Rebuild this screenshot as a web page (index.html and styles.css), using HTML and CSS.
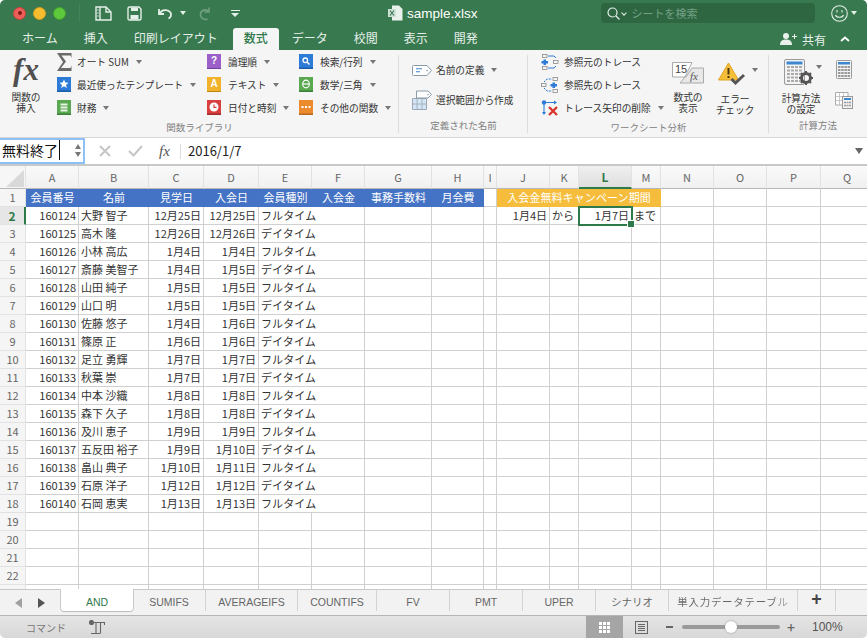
FILE: index.html
```html
<!DOCTYPE html>
<html lang="ja">
<head>
	<meta charset="UTF-8">
	<title>sample.xlsx</title>
	<link rel="stylesheet" href="styles.css">
</head>
<body>
<div class="window">
	<!-- title bar -->
	<div class="titlebar">
		<div class="lights">
			<span class="light red"></span>
			<span class="light yellow"></span>
			<span class="light green"></span>
		</div>
		<span class="qa-sep"></span>
		<svg class="qa-sidebar" width="17" height="15" viewBox="0 0 17 15" fill="none" stroke="#e4efe8" stroke-width="1.4"><path d="M1 1H11L16 6V14H1Z"/><path d="M5 1V14M2.5 4H3.5M2.5 7H3.5M2.5 10H3.5M11 1V6H16"/></svg>
		<svg class="qa-save" width="15" height="15" viewBox="0 0 15 15"><path d="M1 2.5Q1 1 2.5 1H12L14 3V12.5Q14 14 12.5 14H2.5Q1 14 1 12.5Z" fill="none" stroke="#e4efe8" stroke-width="1.4"/><path d="M4 1.5H11V5H4ZM3.5 9H11.5V13.5H3.5Z" fill="#e4efe8"/></svg>
		<svg class="qa-undo" width="16" height="14" viewBox="0 0 16 14" fill="none" stroke="#e4efe8" stroke-width="1.8"><path d="M2 3V8H7"/><path d="M2.5 7.5C5 3.5 11 3 13.5 6.5C15 9 13.5 11.5 11.5 12.5"/></svg>
		<span class="caret light-caret qa-undo-caret"></span>
		<svg class="qa-redo" width="13" height="15" viewBox="0 0 13 15" fill="none" stroke="#6f9f80" stroke-width="1.6"><path d="M10 1.5V6H5.5"/><path d="M9.5 5.5C7 2.5 2 4 1.5 8C1 11.500 5 14.500 8.500 13"/></svg>
		<span class="qa-more"></span>
		<div class="doc-title">
			<svg width="15" height="16" viewBox="0 0 15 16"><path d="M4 0.500H11L14.500 4V15.500H4Z" fill="#e9f1ec"/><path d="M0 4H8V12H0Z" fill="#cfe0d6"/><path d="M2 5.500L6 10.500M6 5.500L2 10.500" stroke="#3a7a50" stroke-width="1.200"/></svg>
			<span>sample.xlsx</span>
		</div>
		<div class="searchbox">
			<svg width="13" height="13" viewBox="0 0 13 13" fill="none" stroke="#e4efe8" stroke-width="1.2"><circle cx="5.500" cy="5.500" r="4.500"/><path d="M9 9L12.500 12.500"/></svg>
			<span class="search-chev"></span>
			<span class="search-text">シートを検索</span>
		</div>
		<svg class="smiley" width="17" height="17" viewBox="0 0 17 17" fill="none" stroke="#e4efe8" stroke-width="1.1"><circle cx="8.500" cy="8.500" r="7.800"/><path d="M4.500 10C5.500 13 11.500 13 12.500 10"/><path d="M6 5V7.500M11 5V7.500"/></svg>
		<span class="caret light-caret"></span>
	</div>

	<!-- ribbon tabs -->
	<div class="tabbar">
		<a class="rtab">ホーム</a>
		<a class="rtab">挿入</a>
		<a class="rtab">印刷レイアウト</a>
		<a class="rtab active">数式</a>
		<a class="rtab">データ</a>
		<a class="rtab">校閲</a>
		<a class="rtab">表示</a>
		<a class="rtab">開発</a>
		<div class="share">
			<svg width="17" height="12" viewBox="0 0 17 12" fill="#e9f1ec"><circle cx="6" cy="3" r="3"/><path d="M0 12C0 7.500 3 6.500 6 6.500S12 7.500 12 12Z"/><path d="M12 3H14V1H15V3H17V4H15V6H14V4H12Z"/></svg>
			<span>共有</span>
			<svg class="chev" width="10" height="6" viewBox="0 0 10 6" fill="none" stroke="#fff" stroke-width="1.800"><path d="M1 5L5 1.500L9 5"/></svg>
		</div>
	</div>

	<!-- ribbon -->
	<div class="ribbon">
		<section class="group g-lib">
			<div class="group-body">
				<div class="big big-fx">
					<span class="fx-glyph">fx</span>
					<span class="big-label">関数の<br>挿入</span>
				</div>
				<div class="col col-a">
					<div class="item"><svg class="ico" width="15" height="18" viewBox="0 0 15 18"><path d="M0 0H14.500V5L13.500 2.500H4.500L9 8.500L4 15H13.500L14.500 12.500V18H0L6 9Z" fill="#6a6a6a"/></svg><span>オート SUM</span><i class="caret"></i></div>
					<div class="item"><svg class="ico" width="14" height="15" viewBox="0 0 14 15"><rect width="14" height="15" fill="#2c7bd6"/><rect y="13.500" width="14" height="1.500" fill="#1f5fa8"/><path d="M7 2.500L8.300 5.600L11.500 5.800L9 7.900L9.900 11L7 9.300L4.100 11L5 7.900L2.500 5.800L5.700 5.600Z" fill="#fff"/></svg><span>最近使ったテンプレート</span><i class="caret"></i></div>
					<div class="item"><svg class="ico" width="14" height="15" viewBox="0 0 14 15"><rect width="14" height="15" fill="#5aa84f"/><rect y="13.500" width="14" height="1.500" fill="#3c7f36"/><path d="M3.500 3.500H10.500V5.500H3.500ZM3.500 6.500H10.500V8.500H3.500ZM3.500 9.500H10.500V11.500H3.500Z" fill="#e8f4e6"/></svg><span>財務</span><i class="caret"></i></div>
				</div>
				<div class="col col-b">
					<div class="item"><span class="ico-letter purple">?</span><span>論理順</span><i class="caret"></i></div>
					<div class="item"><span class="ico-letter amber">A</span><span>テキスト</span><i class="caret"></i></div>
					<div class="item"><svg class="ico" width="14" height="15" viewBox="0 0 14 15"><rect width="14" height="15" fill="#d93f3f"/><rect y="13.500" width="14" height="1.500" fill="#a52c2c"/><circle cx="7" cy="7" r="4.500" fill="#fff"/><path d="M7 4.500V7.300H9.500" fill="none" stroke="#d93f3f" stroke-width="1.200"/></svg><span>日付と時刻</span><i class="caret"></i></div>
				</div>
				<div class="col col-c">
					<div class="item"><svg class="ico" width="14" height="15" viewBox="0 0 14 15"><rect width="14" height="15" fill="#2c7bd6"/><rect y="13.500" width="14" height="1.500" fill="#1f5fa8"/><circle cx="6.300" cy="6.300" r="2.300" fill="none" stroke="#fff" stroke-width="1.300"/><path d="M8 8L10.500 10.500" stroke="#fff" stroke-width="1.500"/></svg><span>検索/行列</span><i class="caret"></i></div>
					<div class="item"><svg class="ico" width="14" height="15" viewBox="0 0 14 15"><rect width="14" height="15" fill="#5aa84f"/><rect y="13.500" width="14" height="1.500" fill="#3c7f36"/><ellipse cx="7" cy="7" rx="3.300" ry="3.800" fill="none" stroke="#fff" stroke-width="1.200"/><path d="M4 7H10" stroke="#fff" stroke-width="1.100"/></svg><span>数学/三角</span><i class="caret"></i></div>
					<div class="item"><svg class="ico" width="14" height="15" viewBox="0 0 14 15"><rect width="14" height="15" fill="#ec8a2e"/><rect y="13.500" width="14" height="1.500" fill="#b9691f"/><path d="M2.500 6H4.500V8H2.500ZM6 6H8V8H6ZM9.500 6H11.500V8H9.500Z" fill="#fff"/></svg><span>その他の関数</span><i class="caret"></i></div>
				</div>
			</div>
			<div class="group-label">関数ライブラリ</div>
		</section>

		<section class="group g-names">
			<div class="group-body names-body">
				<div class="item tall"><svg class="ico" width="20" height="11" viewBox="0 0 20 11"><path d="M1.500 0.500H15L19.500 5.500L15 10.500H1.500Q0.500 10.500 0.500 9.500V1.500Q0.500 0.500 1.500 0.500Z" fill="#fff" stroke="#8a9aa8"/><path d="M4 3.800H10M4 6.800H8" stroke="#3d86d0" stroke-width="1.100"/><circle cx="15" cy="5.500" r="0.800" fill="#8a9aa8"/></svg><span>名前の定義</span><i class="caret"></i></div>
				<div class="item tall"><svg class="ico" width="20" height="20" viewBox="0 0 20 20"><path d="M0.500 8.500H14.500V19.500H0.500Z" fill="#d5e4f4" stroke="#9aa8b5"/><path d="M5 8.500V19.500M10 8.500V19.500M0.500 14H14.500" stroke="#9aa8b5" stroke-width="0.800"/><path d="M4.500 1H16L19.500 4.500L16 8H4.500Z" fill="#fff" stroke="#8a9aa8"/><circle cx="16" cy="4.500" r="0.800" fill="#8a9aa8"/></svg><span>選択範囲から作成</span></div>
			</div>
			<div class="group-label">定義された名前</div>
		</section>

		<section class="group g-audit">
			<div class="group-body">
				<div class="col col-trace">
					<div class="item"><svg class="ico" width="18" height="16" viewBox="0 0 18 16"><g fill="none" stroke="#8a8a8a" stroke-width="0.800"><rect x="1.500" y="0.500" width="4.500" height="3"/><rect x="1.500" y="12.500" width="4.500" height="3"/><rect x="12.500" y="6.500" width="4.500" height="3"/></g><path d="M7 2H13L15 4M7 14H13L15 12" fill="none" stroke="#2c7bd6" stroke-width="1"/><path d="M2.500 5.500H5V7H7V9.500H5V11H2.500V9.500H0.500V7H2.500Z" fill="#2c7bd6"/></svg><span>参照元のトレース</span></div>
					<div class="item"><svg class="ico" width="18" height="16" viewBox="0 0 18 16"><g fill="none" stroke="#8a8a8a" stroke-width="0.800"><rect x="12" y="0.500" width="4.500" height="3"/><rect x="12" y="12.500" width="4.500" height="3"/><rect x="0.500" y="6.500" width="4.500" height="3"/></g><path d="M3 5L6 2H11M3 11L6 14H11" fill="none" stroke="#2c7bd6" stroke-width="1" stroke-dasharray="2 1"/><path d="M11.500 5.500H14V7H16V9.500H14V11H11.500V9.500H9.500V7H11.500Z" fill="#2c7bd6"/></svg><span>参照先のトレース</span></div>
					<div class="item"><svg class="ico" width="18" height="16" viewBox="0 0 18 16"><circle cx="3" cy="2.500" r="2.200" fill="#2c7bd6"/><path d="M3 3V14M5 2.500H15" stroke="#2c7bd6" stroke-width="1.100" fill="none"/><path d="M1 12L3 15L5 12ZM13 0.500L16 2.500L13 4.500Z" fill="#2c7bd6"/><path d="M8 7L16 15M16 7L8 15" stroke="#d8352e" stroke-width="2.400"/></svg><span>トレース矢印の削除</span><i class="caret"></i></div>
				</div>
				<div class="big big-formulas">
					<svg width="32" height="22" viewBox="0 0 32 22"><path d="M0.500 0.500H20L13 15H0.500Z" fill="#fff" stroke="#aaa"/><path d="M20 6H31.500V21H8L13 15H14Z" fill="#e8e8e8" stroke="#aaa"/><text x="3" y="11" class="svg-15">15</text><text x="18" y="18" class="svg-fx">fx</text></svg>
					<span class="big-label">数式の<br>表示</span>
				</div>
				<div class="big big-error">
					<div class="error-top">
						<svg width="28" height="24" viewBox="0 0 28 24"><path d="M10.500 1L20.500 18H0.500Z" fill="#f6bf3a" stroke="#e0a321" stroke-linejoin="round"/><path d="M9.500 6H11.500V12.500H9.500ZM9.500 14H11.500V16H9.500Z" fill="#4a3a10"/><path d="M13.500 17L17.500 21L26 13" fill="none" stroke="#555" stroke-width="3"/></svg>
						<i class="caret"></i>
					</div>
					<span class="big-label">エラー<br>チェック</span>
				</div>
			</div>
			<div class="group-label">ワークシート分析</div>
		</section>

		<section class="group g-calc">
			<div class="group-body">
				<div class="big big-calc">
					<div class="error-top">
						<svg width="30" height="27" viewBox="0 0 30 27"><rect x="0.500" y="0.500" width="20" height="25" rx="1.500" fill="#f4f4f4" stroke="#999"/><rect x="2.500" y="2.500" width="16" height="3" fill="#3d86d0"/><path d="M3 8H18M3 11.500H18M3 15H18M3 18.500H18M3 22H18" stroke="#aaa" stroke-width="2" stroke-dasharray="3 1"/><circle cx="22" cy="19" r="4.500" fill="none" stroke="#555" stroke-width="3"/><path d="M22 12V14.500M22 23.500V26M15 19H17.500M26.500 19H29M17 14L18.800 15.800M25.200 22.200L27 24M27 14L25.200 15.800M18.800 22.200L17 24" stroke="#555" stroke-width="2"/></svg>
						<i class="caret"></i>
					</div>
					<span class="big-label">計算方法<br>の設定</span>
				</div>
				<div class="col col-sheets">
					<svg width="16" height="19" viewBox="0 0 16 19"><rect x="0.500" y="0.500" width="15" height="18" rx="1" fill="#f4f4f4" stroke="#999"/><rect x="2" y="2" width="12" height="2.500" fill="#3d86d0"/><path d="M2 7H14M2 10H14M2 13H14M2 16H14" stroke="#999" stroke-width="1.800" stroke-dasharray="2.500 0.700"/></svg>
					<svg width="18" height="17" viewBox="0 0 18 17"><path d="M0.500 0.500H13V13H0.500Z" fill="#fff" stroke="#aaa"/><path d="M4.500 0.500V13M8.500 0.500V13M0.500 4.500H13M0.500 8.500H13" stroke="#bbb" stroke-width="0.800"/><rect x="7.500" y="4.500" width="10" height="12" fill="#f4f4f4" stroke="#999"/><rect x="9" y="6" width="7" height="2" fill="#3d86d0"/><path d="M9 10.500H16M9 13.500H16" stroke="#999" stroke-width="1.500" stroke-dasharray="2 0.500"/></svg>
				</div>
			</div>
			<div class="group-label">計算方法</div>
		</section>
	</div>

	<!-- formula bar -->
	<div class="formula">
		<div class="namebox">
			<span class="name-text">無料終了</span>
			<span class="stepper"><i class="up"></i><i class="down"></i></span>
		</div>
		<svg class="f-cancel" width="12" height="12" viewBox="0 0 12 12" stroke="#c6c6c6" stroke-width="2"><path d="M1 1L11 11M11 1L1 11"/></svg>
		<svg class="f-ok" width="15" height="12" viewBox="0 0 15 12" fill="none" stroke="#c6c6c6" stroke-width="2"><path d="M1 6L5.500 10.500L14 1"/></svg>
		<span class="f-fx">fx</span>
		<span class="f-value">2016/1/7</span>
		<span class="f-drop"></span>
	</div>

	<!-- sheet -->
	<div class="sheet">
		<div class="grid">
			<div class="corner"><svg width="18" height="17" viewBox="0 0 18 17"><path d="M18 0V17H0Z" fill="#d9d9d9"/></svg></div>
			<div class="ch">A</div><div class="ch">B</div><div class="ch">C</div><div class="ch">D</div><div class="ch">E</div><div class="ch">F</div><div class="ch">G</div><div class="ch">H</div><div class="ch">I</div><div class="ch">J</div><div class="ch">K</div><div class="ch sel">L</div><div class="ch">M</div><div class="ch">N</div><div class="ch">O</div><div class="ch">P</div><div class="ch">Q</div>

			<div class="rh">1</div><div class="hd">会員番号</div><div class="hd">名前</div><div class="hd">見学日</div><div class="hd">入会日</div><div class="hd">会員種別</div><div class="hd">入会金</div><div class="hd">事務手数料</div><div class="hd">月会費</div><div></div><div class="camp">入会金無料キャンペーン期間</div><div></div><div></div><div></div><div></div>

			<div class="rh sel">2</div><div class="r">160124</div><div>大野 智子</div><div class="r">12月25日</div><div class="r">12月25日</div><div class="of">フルタイム</div><div></div><div></div><div></div><div></div><div class="r">1月4日</div><div>から</div><div class="r cursor">1月7日</div><div>まで</div><div></div><div></div><div></div><div></div>
			<div class="rh">3</div><div class="r">160125</div><div>高木 隆</div><div class="r">12月26日</div><div class="r">12月26日</div><div class="of">デイタイム</div><div></div><div></div><div></div><div></div><div></div><div></div><div></div><div></div><div></div><div></div><div></div><div></div>
			<div class="rh">4</div><div class="r">160126</div><div>小林 高広</div><div class="r">1月4日</div><div class="r">1月4日</div><div class="of">フルタイム</div><div></div><div></div><div></div><div></div><div></div><div></div><div></div><div></div><div></div><div></div><div></div><div></div>
			<div class="rh">5</div><div class="r">160127</div><div>斎藤 美智子</div><div class="r">1月4日</div><div class="r">1月5日</div><div class="of">デイタイム</div><div></div><div></div><div></div><div></div><div></div><div></div><div></div><div></div><div></div><div></div><div></div><div></div>
			<div class="rh">6</div><div class="r">160128</div><div>山田 純子</div><div class="r">1月5日</div><div class="r">1月5日</div><div class="of">フルタイム</div><div></div><div></div><div></div><div></div><div></div><div></div><div></div><div></div><div></div><div></div><div></div><div></div>
			<div class="rh">7</div><div class="r">160129</div><div>山口 明</div><div class="r">1月5日</div><div class="r">1月5日</div><div class="of">デイタイム</div><div></div><div></div><div></div><div></div><div></div><div></div><div></div><div></div><div></div><div></div><div></div><div></div>
			<div class="rh">8</div><div class="r">160130</div><div>佐藤 悠子</div><div class="r">1月4日</div><div class="r">1月6日</div><div class="of">フルタイム</div><div></div><div></div><div></div><div></div><div></div><div></div><div></div><div></div><div></div><div></div><div></div><div></div>
			<div class="rh">9</div><div class="r">160131</div><div>篠原 正</div><div class="r">1月6日</div><div class="r">1月6日</div><div class="of">デイタイム</div><div></div><div></div><div></div><div></div><div></div><div></div><div></div><div></div><div></div><div></div><div></div><div></div>
			<div class="rh">10</div><div class="r">160132</div><div>足立 勇輝</div><div class="r">1月7日</div><div class="r">1月7日</div><div class="of">フルタイム</div><div></div><div></div><div></div><div></div><div></div><div></div><div></div><div></div><div></div><div></div><div></div><div></div>
			<div class="rh">11</div><div class="r">160133</div><div>秋葉 崇</div><div class="r">1月7日</div><div class="r">1月7日</div><div class="of">デイタイム</div><div></div><div></div><div></div><div></div><div></div><div></div><div></div><div></div><div></div><div></div><div></div><div></div>
			<div class="rh">12</div><div class="r">160134</div><div>中本 沙織</div><div class="r">1月8日</div><div class="r">1月8日</div><div class="of">フルタイム</div><div></div><div></div><div></div><div></div><div></div><div></div><div></div><div></div><div></div><div></div><div></div><div></div>
			<div class="rh">13</div><div class="r">160135</div><div>森下 久子</div><div class="r">1月8日</div><div class="r">1月8日</div><div class="of">デイタイム</div><div></div><div></div><div></div><div></div><div></div><div></div><div></div><div></div><div></div><div></div><div></div><div></div>
			<div class="rh">14</div><div class="r">160136</div><div>及川 恵子</div><div class="r">1月9日</div><div class="r">1月9日</div><div class="of">フルタイム</div><div></div><div></div><div></div><div></div><div></div><div></div><div></div><div></div><div></div><div></div><div></div><div></div>
			<div class="rh">15</div><div class="r">160137</div><div>五反田 裕子</div><div class="r">1月9日</div><div class="r">1月10日</div><div class="of">デイタイム</div><div></div><div></div><div></div><div></div><div></div><div></div><div></div><div></div><div></div><div></div><div></div><div></div>
			<div class="rh">16</div><div class="r">160138</div><div>畠山 典子</div><div class="r">1月10日</div><div class="r">1月11日</div><div class="of">フルタイム</div><div></div><div></div><div></div><div></div><div></div><div></div><div></div><div></div><div></div><div></div><div></div><div></div>
			<div class="rh">17</div><div class="r">160139</div><div>石原 洋子</div><div class="r">1月12日</div><div class="r">1月12日</div><div class="of">デイタイム</div><div></div><div></div><div></div><div></div><div></div><div></div><div></div><div></div><div></div><div></div><div></div><div></div>
			<div class="rh">18</div><div class="r">160140</div><div>石岡 恵実</div><div class="r">1月13日</div><div class="r">1月13日</div><div class="of">フルタイム</div><div></div><div></div><div></div><div></div><div></div><div></div><div></div><div></div><div></div><div></div><div></div><div></div>
			<div class="rh">19</div><div></div><div></div><div></div><div></div><div></div><div></div><div></div><div></div><div></div><div></div><div></div><div></div><div></div><div></div><div></div><div></div><div></div>
			<div class="rh">20</div><div></div><div></div><div></div><div></div><div></div><div></div><div></div><div></div><div></div><div></div><div></div><div></div><div></div><div></div><div></div><div></div><div></div>
			<div class="rh">21</div><div></div><div></div><div></div><div></div><div></div><div></div><div></div><div></div><div></div><div></div><div></div><div></div><div></div><div></div><div></div><div></div><div></div>
			<div class="rh">22</div><div></div><div></div><div></div><div></div><div></div><div></div><div></div><div></div><div></div><div></div><div></div><div></div><div></div><div></div><div></div><div></div><div></div>
			<div class="rh"></div><div></div><div></div><div></div><div></div><div></div><div></div><div></div><div></div><div></div><div></div><div></div><div></div><div></div><div></div><div></div><div></div><div></div>
		</div>
	</div>

	<!-- sheet tabs -->
	<div class="sheetbar">
		<div class="sheet-nav"><i class="nav-left"></i><i class="nav-right"></i></div>
		<a class="stab active w-and">AND</a>
		<a class="stab w-73">SUMIFS</a>
		<a class="stab w-avg">AVERAGEIFS</a>
		<a class="stab w-cnt">COUNTIFS</a>
		<a class="stab w-73">FV</a>
		<a class="stab w-73">PMT</a>
		<a class="stab w-73">UPER</a>
		<a class="stab w-73">シナリオ</a>
		<a class="stab w-long"><span>単入力データテーブル</span></a>
		<a class="stab w-add">+</a>
	</div>

	<!-- status bar -->
	<div class="status">
		<span class="st-text">コマンド</span>
		<svg class="st-macro" width="16" height="14" viewBox="0 0 16 14" fill="none" stroke="#666" stroke-width="1.100"><circle cx="2.500" cy="2.500" r="2" fill="#666"/><path d="M4 2.500H15.500V5M7 2.500V13M2 13.500H11.500M11.500 2.500V13"/></svg>
		<div class="st-right">
			<span class="view active"><svg width="13" height="13" viewBox="0 0 13 13" fill="#fff" stroke="#a5a5a5" stroke-width="1"><rect x="0.500" y="0.500" width="12" height="12"/><path d="M4.500 0.500V12.500M8.500 0.500V12.500M0.500 4.500H12.500M0.500 8.500H12.500"/></svg></span>
			<span class="view"><svg width="13" height="13" viewBox="0 0 13 13" fill="none" stroke="#666" stroke-width="1"><rect x="0.500" y="0.500" width="12" height="12"/><path d="M3 3.500H10M3 5.500H10M3 7.500H10M3 9.500H10"/></svg></span>
			<span class="zoom-minus"></span>
			<div class="slider"><span class="thumb"></span></div>
			<span class="zoom-plus">+</span>
			<span class="zoom-val">100%</span>
		</div>
	</div>
</div>
</body>
</html>
```

FILE: styles.css
```css
*{
	margin: 0;
	padding: 0;
	box-sizing: border-box;
}
html,body{
	height: 100%;
	background: #fff;
}
body{
	font-family: "Noto Sans CJK JP", "Liberation Sans", sans-serif;
	font-size: 10px;
	color: #333;
	overflow: hidden;
}
i{
	font-style: normal;
}
.window{
	display: flex;
	flex-direction: column;
	width: 867px;
	height: 638px;
	border-radius: 5px;
	overflow: hidden;
}

/* title bar */
.titlebar{
	display: flex;
	align-items: center;
	height: 26px;
	flex: none;
	background: #38794f;
}
.lights{
	display: flex;
	gap: 7px;
	margin-left: 13px;
}
.light{
	position: relative;
	width: 13px;
	height: 13px;
	border-radius: 50%;
}
.light.red{
	background: #ec5f58;
	border: 1px solid #c9433c;
}
.light.red::after{
	content: "";
	position: absolute;
	left: 3.500px;
	top: 3.500px;
	width: 4px;
	height: 4px;
	border-radius: 50%;
	background: #7e1b16;
}
.light.yellow{
	background: #f7bd2e;
	border: 1px solid #d79f1f;
}
.light.green{
	background: #5ec83d;
	border: 1px solid #45a52b;
}
.qa-sep{
	width: 1px;
	height: 18px;
	margin-left: 13px;
	background: #44845b;
}
.qa-sidebar{
	margin-left: 15px;
}
.qa-save{
	margin-left: 15px;
}
.qa-undo{
	margin-left: 15px;
}
.qa-undo-caret{
	margin-left: 6px;
}
.qa-redo{
	margin-left: 13px;
}
.qa-more{
	width: 9px;
	height: 7px;
	margin-left: 19px;
	border-top: 1px solid #e4efe8;
	position: relative;
}
.qa-more::after{
	content: "";
	position: absolute;
	left: 0;
	top: 2px;
	border-left: 4.500px solid transparent;
	border-right: 4.500px solid transparent;
	border-top: 4px solid #e4efe8;
}
.caret{
	display: inline-block;
	flex: none;
	width: 0;
	height: 0;
	margin-left: 7px;
	border-left: 3.500px solid transparent;
	border-right: 3.500px solid transparent;
	border-top: 4px solid #777;
}
.light-caret{
	border-top-color: #e4efe8;
}
.doc-title{
	display: flex;
	align-items: center;
	gap: 4px;
	margin-left: 148px;
	color: #fff;
	font-family: "Liberation Sans", sans-serif;
	font-size: 13.500px;
}
.searchbox{
	display: flex;
	align-items: center;
	width: 214px;
	height: 20px;
	margin-left: 123px;
	padding-left: 6px;
	border-radius: 4px;
	background: #2f6642;
}
.search-chev{
	width: 4px;
	height: 4px;
	margin-left: 2px;
	border-right: 1px solid #e4efe8;
	border-bottom: 1px solid #e4efe8;
	transform: rotate(45deg);
}
.search-text{
	margin-left: 6px;
	font-size: 11px;
	color: #74a185;
}
.smiley{
	margin-left: 16px;
}
.titlebar .smiley + .caret{
	margin-left: 3px;
}

/* ribbon tabs */
.tabbar{
	display: flex;
	align-items: flex-end;
	height: 24px;
	flex: none;
	padding-left: 9px;
	background: #38794f;
}
.rtab{
	height: 22px;
	padding: 0 13px;
	font-size: 12px;
	line-height: 20px;
	color: #e6f0ea;
}
.rtab.active{
	margin: 0 0 0 2px;
	padding: 0 11px;
	border-radius: 3px 3px 0 0;
	background: #f5f5f5;
	color: #2f7a4b;
	font-weight: 500;
}
.share{
	display: flex;
	align-items: center;
	gap: 5px;
	height: 22px;
	margin-left: auto;
	padding-right: 17px;
	font-size: 12px;
	color: #e9f1ec;
}
.share .chev{
	margin-left: 9px;
}

/* ribbon */
.ribbon{
	display: flex;
	height: 87px;
	flex: none;
	background: #f5f5f5;
}
.group{
	display: flex;
	flex-direction: column;
	position: relative;
}
.group::after{
	content: "";
	position: absolute;
	right: 0;
	top: 5px;
	bottom: 4px;
	width: 1px;
	background: #dcdcdc;
}
.group:last-child::after{
	display: none;
}
.g-lib{
	width: 399px;
}
.g-names{
	width: 129px;
}
.g-audit{
	width: 241px;
}
.g-calc{
	flex: 1;
}
.group-body{
	display: flex;
	flex: 1;
}
.group-label{
	flex: none;
	height: 20px;
	font-size: 9.500px;
	line-height: 16px;
	text-align: center;
	color: #808080;
}
.col{
	display: flex;
	flex-direction: column;
}
.item{
	display: flex;
	align-items: center;
	height: 23px;
	font-size: 9.700px;
	white-space: nowrap;
}
.item.tall{
	height: 30px;
}
.ico{
	flex: none;
	margin-right: 6px;
}
.ico-letter{
	flex: none;
	width: 14px;
	height: 15px;
	margin-right: 7px;
	font-family: "Liberation Sans", sans-serif;
	font-size: 10px;
	font-weight: 700;
	line-height: 13px;
	text-align: center;
	color: #fff;
}
.ico-letter.purple{
	background: #9a5fc9;
	border-bottom: 1.500px solid #70409a;
}
.ico-letter.amber{
	background: #f3b22c;
	border-bottom: 1.500px solid #bd8615;
}
.col-a{
	width: 150px;
	margin-left: 5px;
}
.col-b{
	width: 92px;
}
.col-a .item:first-child .ico{
	margin-right: 5px;
}
.col-b .item svg.ico,.col-c .item svg.ico{
	margin-right: 7px;
}
.big{
	display: flex;
	flex-direction: column;
	align-items: center;
	flex: none;
	white-space: nowrap;
}
.big-label{
	font-size: 9.700px;
	line-height: 11px;
	text-align: center;
}
.big-fx{
	width: 52px;
}
.fx-glyph{
	height: 42px;
	font-family: "Liberation Serif", serif;
	font-style: italic;
	font-weight: 700;
	font-size: 31px;
	line-height: 40px;
	color: #505050;
}
.names-body{
	flex-direction: column;
	padding: 5px 0 0 13px;
}
.names-body .ico{
	margin-right: 4px;
}
.col-trace{
	width: 124px;
	margin-left: 13px;
	flex: none;
}
.col-trace .ico{
	margin-right: 5px;
}
.big-formulas{
	width: 46px;
	padding-top: 12px;
}
.big-formulas svg{
	margin-bottom: 8px;
}
.svg-15{
	font-family: "Liberation Sans", sans-serif;
	font-size: 11px;
	fill: #444;
}
.svg-fx{
	font-family: "Liberation Serif", serif;
	font-style: italic;
	font-size: 11px;
	fill: #555;
}
.big-error{
	width: 48px;
	padding-top: 12px;
}
.error-top{
	display: flex;
	align-items: center;
	align-self: flex-start;
}
.big-error .error-top{
	margin-left: 7px;
}
.error-top .caret{
	align-self: flex-start;
	margin: 6px 0 0 2px;
}
.big-error .caret{
	margin-left: 6px;
}
.big-error .big-label{
	margin-top: 8px;
}
.big-calc{
	width: 64px;
	padding-top: 9px;
}
.big-calc .error-top{
	margin-left: 15px;
}
.big-calc .big-label{
	margin-top: 7px;
}
.col-sheets{
	align-items: center;
	gap: 13px;
	width: 22px;
	padding-top: 10px;
}

/* formula bar */
.formula{
	display: flex;
	align-items: center;
	height: 29px;
	flex: none;
	border-top: 1px solid #d6d6d6;
	border-bottom: 2px solid #c8c8c8;
	background: #fff;
}
.namebox{
	display: flex;
	align-items: center;
	width: 85px;
	height: 26px;
	flex: none;
	padding-left: 2px;
	padding-bottom: 2px;
	border: 2px solid #8ec1f3;
	border-left: 0;
}
.name-text{
	width: 58px;
	font-size: 14px;
	line-height: 20px;
	color: #111;
	border-right: 1px solid #111;
}
.stepper{
	display: flex;
	flex-direction: column;
	gap: 3px;
	margin-left: 15px;
}
.stepper .up{
	border-left: 3.500px solid transparent;
	border-right: 3.500px solid transparent;
	border-bottom: 5px solid #777;
}
.stepper .down{
	border-left: 3.500px solid transparent;
	border-right: 3.500px solid transparent;
	border-top: 5px solid #777;
}
.f-cancel{
	margin-left: 14px;
}
.f-ok{
	margin-left: 17px;
}
.f-fx{
	width: 22px;
	margin-left: 16px;
	border-right: 1px solid #ddd;
	font-family: "Liberation Serif", serif;
	font-style: italic;
	font-size: 15px;
	line-height: 15px;
	color: #555;
}
.f-value{
	margin-left: 7px;
	margin-bottom: 2px;
	font-size: 13px;
	color: #222;
}
.f-drop{
	margin-left: auto;
	margin-right: 4px;
	border-left: 4px solid transparent;
	border-right: 4px solid transparent;
	border-top: 6px solid #666;
}

/* sheet */
.sheet{
	height: 423px;
	flex: none;
	overflow: hidden;
	background: #fff;
}
.grid{
	display: grid;
	grid-template-columns: 26px 53px 70px 55px 55px 53px 53px 67px 52px 13px 53px 29px 53px 29px 53px 53px 54px 53px;
	grid-template-rows: 23px;
	grid-auto-rows: 18px;
	width: 867px;
	font-size: 11px;
	line-height: 17px;
	color: #333;
}
.grid > div{
	overflow: visible;
	padding: 0 2px;
	border-right: 1px solid #d0d0d0;
	border-bottom: 1px solid #d0d0d0;
	white-space: nowrap;
}
.grid > .corner{
	padding: 4px 0 0 6px;
	background: #f6f6f6;
	border-right-color: #e2e2e2;
	border-bottom-color: #b8b8b8;
}
.corner svg{
	display: block;
}
.grid > .ch{
	padding: 0;
	line-height: 22px;
	text-align: center;
	color: #666;
	background: linear-gradient(#fafafa, #f0f0f0);
	border-right-color: #e2e2e2;
	border-bottom-color: #b8b8b8;
}
.grid > .ch.sel{
	font-weight: 700;
	font-size: 12px;
	color: #2f7a4b;
	background: linear-gradient(#f0f0f0, #dedede);
	border-bottom: 2px solid #2f7a4b;
}
.grid > .rh{
	padding: 0;
	text-align: center;
	color: #666;
	background: #f5f5f5;
	border-right-color: #e2e2e2;
	border-bottom-color: #e2e2e2;
}
.grid > .rh.sel{
	font-weight: 700;
	font-size: 12px;
	color: #2f7a4b;
	background: #e6e6e6;
	border-right: 2px solid #2f7a4b;
}
.grid > .hd{
	padding: 0;
	text-align: center;
	color: #fff;
	background: #4472c4;
	border: 0;
}
.grid > .camp{
	grid-column: span 4;
	padding: 0;
	text-align: center;
	color: #fff;
	background: #f6bd3c;
	border: 0;
	letter-spacing: 0.100px;
}
.grid > .r{
	text-align: right;
}
.grid > .of{
	position: relative;
	z-index: 1;
	border-right: 0;
	background: #fff;
	margin-right: -4px;
	letter-spacing: 0.100px;
}
.grid > .cursor{
	position: relative;
	outline: 2px solid #2f7a4b;
	outline-offset: -1px;
	z-index: 2;
}
.cursor::after{
	content: "";
	position: absolute;
	right: -4px;
	bottom: -4px;
	width: 6px;
	height: 6px;
	background: #2f7a4b;
	border: 1px solid #fff;
}

/* sheet tabs */
.sheetbar{
	display: flex;
	align-items: flex-start;
	height: 27px;
	flex: none;
	border-top: 1px solid #c8c8c8;
	border-bottom: 1px solid #b5b5b5;
	background: #f2f2f2;
}
.sheet-nav{
	display: flex;
	align-items: center;
	gap: 16px;
	width: 61px;
	height: 25px;
	padding-left: 15px;
}
.nav-left{
	border-top: 5px solid transparent;
	border-bottom: 5px solid transparent;
	border-right: 7px solid #a0a0a0;
}
.nav-right{
	border-top: 5px solid transparent;
	border-bottom: 5px solid transparent;
	border-left: 7px solid #555;
}
.stab{
	height: 21px;
	font-family: "Liberation Sans", "Noto Sans CJK JP", sans-serif;
	font-size: 10.500px;
	line-height: 25px;
	text-align: center;
	white-space: nowrap;
	color: #666;
	border-right: 1px solid #d2d2d2;
}
.stab.active{
	height: 22px;
	margin-top: -1px;
	padding-top: 1px;
	border: 0;
	border-radius: 0 0 3px 3px;
	background: #fff;
	color: #2f7a4b;
	box-shadow: 0 1px 1px #bbb, 1px 0 0 #ccc, -1px 0 0 #ccc;
}
.w-and{
	width: 72px;
}
.w-73{
	width: 73px;
}
.w-avg{
	width: 92px;
}
.w-cnt{
	width: 79px;
}
.w-long{
	width: 129px;
	padding: 0 4px;
	overflow: hidden;
}
.w-long span{
	display: block;
	overflow: hidden;
	letter-spacing: 0.700px;
	background: linear-gradient(90deg, #666 82%, #ccc);
	-webkit-background-clip: text;
	background-clip: text;
	color: transparent;
}
.w-add{
	width: 38px;
	font-size: 18px;
	line-height: 19px;
	font-weight: 700;
	color: #444;
}

/* status bar */
.status{
	display: flex;
	align-items: center;
	flex: 1;
	background: linear-gradient(#e4e4e4, #d8d8d8);
}
.st-text{
	margin-left: 26px;
	color: #777;
}
.st-macro{
	margin-left: 23px;
}
.st-right{
	display: flex;
	align-items: center;
	height: 100%;
	margin-left: auto;
}
.view{
	display: flex;
	align-items: center;
	justify-content: center;
	width: 37px;
	height: 100%;
}
.view.active{
	background: #a5a5a5;
}
.view svg{
	display: block;
}
.zoom-minus{
	width: 7px;
	height: 2px;
	margin-left: 6px;
	background: #666;
}
.slider{
	position: relative;
	width: 98px;
	height: 4px;
	margin-left: 9px;
	border-radius: 2px;
	background: #9a9a9a;
}
.thumb{
	position: absolute;
	left: 43px;
	top: -4px;
	width: 12px;
	height: 12px;
	border-radius: 50%;
	background: #fff;
	box-shadow: 0 0 2px #888;
}
.zoom-plus{
	margin-left: 7px;
	font-size: 14px;
	line-height: 14px;
	font-weight: 500;
	color: #666;
}
.zoom-val{
	width: 72px;
	padding-left: 17px;
	font-family: "Liberation Sans", sans-serif;
	font-size: 12px;
	color: #555;
}
```
